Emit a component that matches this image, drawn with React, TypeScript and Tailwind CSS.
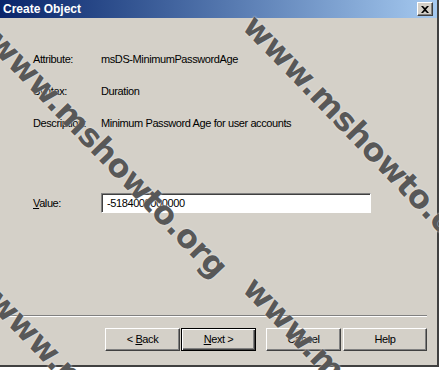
import React from 'react';

const raised =
  'border border-t-white border-l-white border-r-[#404040] border-b-[#404040] shadow-[inset_-1px_-1px_#808080]';

const Field: React.FC<{ label: React.ReactNode; value: string }> = ({ label, value }) => (
  <div className="flex h-[13px] items-center">
    <div className="w-[68px]">{label}</div>
    <div>{value}</div>
  </div>
);

const Btn: React.FC<{ children: React.ReactNode; w?: string; def?: boolean }> = ({ children, w = 'w-[75px]', def }) => (
  <button
    className={
      def
        ? `${w} h-[23px] border border-black shadow-[inset_1px_1px_#fff,inset_-1px_-1px_#404040,inset_-2px_-2px_#808080] bg-[#d4d0c8] text-black`
        : `${w} h-[23px] ${raised} bg-[#d4d0c8] text-black`
    }
  >
    {children}
  </button>
);

// diagonal site watermark laid over the dialog
const Watermark: React.FC<{ className: string }> = ({ className }) => (
  <div
    className={`absolute h-[32px] origin-[0_50%] rotate-[46deg] whitespace-nowrap text-[32px] leading-[32px] font-bold tracking-[-0.5px] text-[#585858] [text-shadow:0_0_2px_#f0f0f0] [font-family:'DejaVu_Sans',sans-serif] pointer-events-none ${className}`}
  >
    www.mshowto.org
  </div>
);

export default function App() {
  return (
    <div className="relative h-[370px] w-[439px] overflow-hidden bg-white text-[11px] tracking-[-0.4px] text-black [font-family:'Liberation_Sans',Arial,sans-serif]">
      <div className="flex h-[367px] flex-col border-r-2 border-r-[#404040] border-b-2 border-b-[#404040] bg-[#d4d0c8]">
        {/* title bar */}
        <div className="flex h-[18px] items-center justify-between bg-gradient-to-r from-[#0a246a] to-[#a6caf0] pl-[3px] pr-[4px]">
          <span className="text-[12px] font-bold tracking-normal text-white">Create Object</span>
          <div className={`flex h-[14px] w-[16px] items-center justify-center bg-[#d4d0c8] ${raised}`}>
            <svg width="8" height="7" viewBox="0 0 8 7">
              <path d="M0 0h2l2 2 2-2h2L5 3.5 8 7H6L4 5 2 7H0l3-3.5z" fill="#000" />
            </svg>
          </div>
        </div>

        <div className="flex flex-col gap-[19px] pl-[33px] pt-[35px]">
          <Field label="Attribute:" value="msDS-MinimumPasswordAge" />
          <Field label="Syntax:" value="Duration" />
          <Field label="Description:" value="Minimum Password Age for user accounts" />
        </div>

        <div className="mt-[63px] flex items-center pl-[33px]">
          <div className="w-[68px]">
            <span className="underline">V</span>alue:
          </div>
          <div className="flex h-[20px] w-[270px] items-center border border-t-[#808080] border-l-[#808080] border-r-white border-b-white bg-white pl-[5px] shadow-[inset_1px_1px_#404040]">
            -5184000000000
          </div>
        </div>

        <div className="mt-[102px] mr-[10px] h-[2px] border-t border-t-[#808080] border-b border-b-white" />

        <div className="mt-[11px] flex justify-end pr-[10px]">
          <div className="flex gap-[1px]">
            <Btn>
              &lt; <span className="underline">B</span>ack
            </Btn>
            <Btn def>
              <span className="underline">N</span>ext &gt;
            </Btn>
          </div>
          <div className="ml-[10px] flex gap-[2px]">
            <Btn>Cancel</Btn>
            <Btn w="w-[84px]">Help</Btn>
          </div>
        </div>
      </div>

      <Watermark className="left-[-6px] top-[20px]" />
      <Watermark className="left-[249px] top-[4px]" />
      <Watermark className="left-[-6px] top-[279px]" />
      <Watermark className="left-[249px] top-[266px]" />
    </div>
  );
}
